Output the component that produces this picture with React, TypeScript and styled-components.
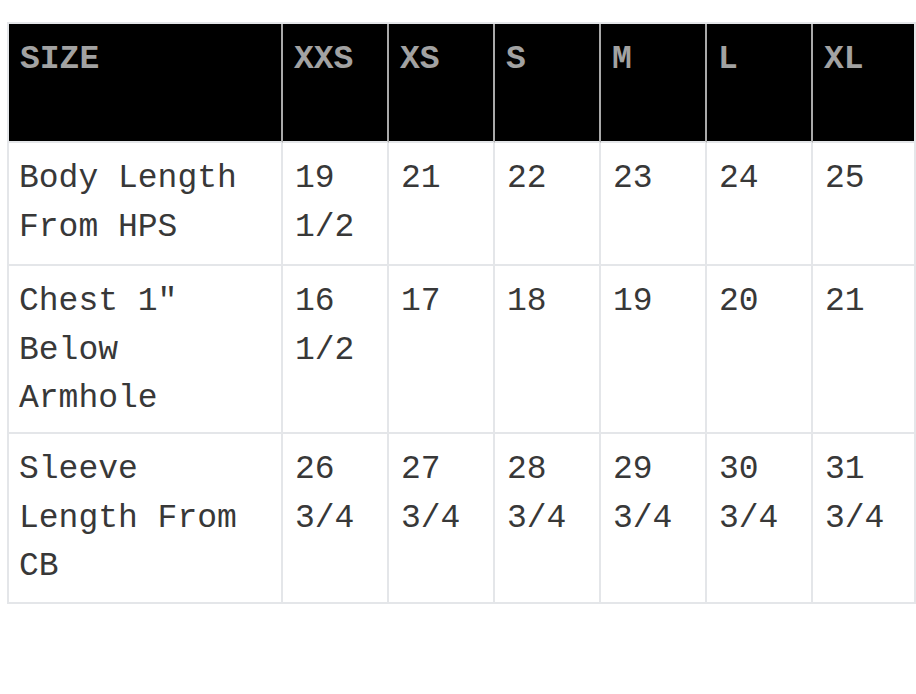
import React from 'react'
import styled, { createGlobalStyle } from 'styled-components'

const GlobalStyle = createGlobalStyle`
  html, body {
    margin: 0;
    background: #ffffff;
  }
`

const sizes = ['XXS', 'XS', 'S', 'M', 'L', 'XL']

const rows = [
  { label: 'Body Length From HPS', values: ['19 1/2', '21', '22', '23', '24', '25'] },
  { label: 'Chest 1" Below Armhole', values: ['16 1/2', '17', '18', '19', '20', '21'] },
  { label: 'Sleeve Length From CB', values: ['26 3/4', '27 3/4', '28 3/4', '29 3/4', '30 3/4', '31 3/4'] },
]

const Page = styled.div`
  padding: 22px 0 0 7px;
`

const Chart = styled.div`
  display: grid;
  grid-template-columns: 274px repeat(5, 106px) 103px;
  grid-template-rows: 119px 123px 168px 170px;
  width: 907px;
  border-top: 2px solid #e4e6e9;
  border-left: 2px solid #e4e6e9;
  font-family: 'Liberation Mono', 'Courier New', monospace;
  font-size: 33px;
  line-height: 48.5px;
`

const HeadCell = styled.div<{ $last?: boolean }>`
  background: #000000;
  color: #a2a2a2;
  font-weight: bold;
  padding: 12px 11px 0 11px;
  border-right: 2px solid ${p => (p.$last ? '#e4e6e9' : '#a9a9a9')};
  border-bottom: 2px solid #e4e6e9;
`

const Cell = styled.div<{ $first?: boolean }>`
  color: #383838;
  padding: 12px 11px 0 ${p => (p.$first ? '10px' : '12px')};
  border-right: 2px solid #e4e6e9;
  border-bottom: 2px solid #e4e6e9;
`

export default function App() {
  return (
    <>
      <GlobalStyle />
      <Page>
        <Chart>
          <HeadCell>SIZE</HeadCell>
          {sizes.map((size, i) => (
            <HeadCell key={size} $last={i === sizes.length - 1}>
              {size}
            </HeadCell>
          ))}
          {rows.map(row => (
            <React.Fragment key={row.label}>
              <Cell $first>{row.label}</Cell>
              {row.values.map((value, i) => (
                <Cell key={i}>{value}</Cell>
              ))}
            </React.Fragment>
          ))}
        </Chart>
      </Page>
    </>
  )
}
